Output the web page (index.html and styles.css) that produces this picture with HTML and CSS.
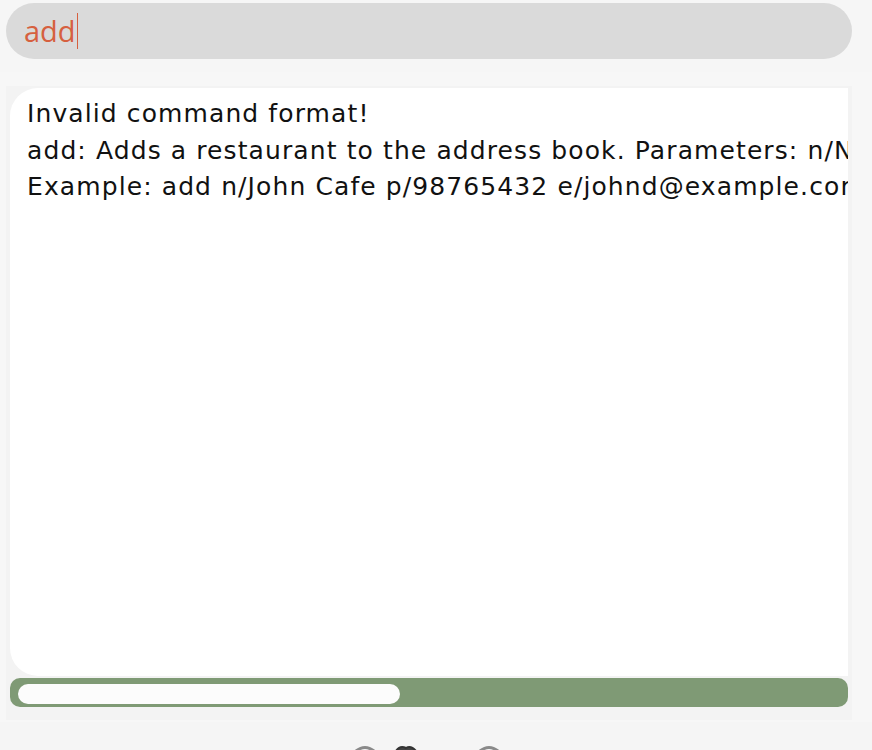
FILE: index.html
```html
<!DOCTYPE html>
<html>
<head>
<meta charset="utf-8">
<link rel="stylesheet" href="styles.css">
</head>
<body>
<div class="top">
  <div class="cmd"><span class="cmd-text">add</span><span class="caret"></span></div>
</div>
<div class="result-wrap">
  <div class="result">
    <div class="textarea">
      <div class="line">Invalid command format!</div>
      <div class="line">add: Adds a restaurant to the address book. Parameters: n/NAME p/PHONE e/EMAIL a/ADDRESS [t/TAG]...</div>
      <div class="line">Example: add n/John Cafe p/98765432 e/johnd@example.com a/311, Clementi Ave 2, #02-25 t/halal</div>
    </div>
    <div class="hscroll"><div class="thumb"></div></div>
  </div>
</div>
<div class="bottom">
  <svg class="peek" width="160" height="8" viewBox="0 0 160 8">
    <path d="M3 9 Q12 2 21 9" fill="none" stroke="#8a8a8a" stroke-width="3"/>
    <path d="M43 9 Q47 3 53 6 Q58 3 63 9" fill="#444" stroke="#333" stroke-width="2"/>
    <path d="M127 9 Q136 2 145 9" fill="none" stroke="#8a8a8a" stroke-width="3"/>
  </svg>
</div>
</body>
</html>
```

FILE: styles.css
```css
html, body {
  margin: 0;
  padding: 0;
  background: #f5f5f5;
  width: 872px;
  height: 750px;
  overflow: hidden;
}

.top {
  height: 72px;
  padding: 3px 0 0 6px;
  box-sizing: border-box;
  background: #f6f6f6;
}

.cmd {
  width: 846px;
  height: 56px;
  border-radius: 28px;
  background: #dadada;
  display: flex;
  align-items: center;
  padding-left: 18px;
  box-sizing: border-box;
}

.cmd-text {
  font-family: "Open Sans", sans-serif;
  font-size: 29px;
  color: #d6603f;
  line-height: 36px;
}

.caret {
  display: inline-block;
  width: 1px;
  height: 36px;
  background: #d6603f;
  margin-left: 1px;
}

.result-wrap {
  height: 650px;
  padding: 14px 0 0 6px;
  box-sizing: border-box;
  background: #f7f7f7;
}

.result {
  width: 846px;
  height: 634px;
  background: #f3f3f3;
  padding: 2px 4px 0 4px;
  box-sizing: border-box;
}

.textarea {
  height: 588px;
  background: #ffffff;
  border-radius: 28px 0 0 28px;
  padding: 8px 0 0 17px;
  box-sizing: border-box;
  overflow: hidden;
  white-space: nowrap;
  font-family: "DejaVu Sans", Verdana, sans-serif;
  font-size: 25px;
  letter-spacing: 1.1px;
  line-height: 36.5px;
  color: #111111;
}

.line {
  white-space: nowrap;
}

.hscroll {
  margin-top: 2px;
  height: 29px;
  background: #7f9a75;
  border-radius: 10px;
  padding: 6px 0 0 8px;
  box-sizing: border-box;
}

.thumb {
  width: 382px;
  height: 20px;
  border-radius: 10px;
  background: #fcfcfc;
}

.bottom {
  height: 28px;
  display: flex;
  justify-content: flex-start;
  align-items: flex-end;
  padding-left: 353px;
  box-sizing: border-box;
}

.peek {
  display: block;
}
```
